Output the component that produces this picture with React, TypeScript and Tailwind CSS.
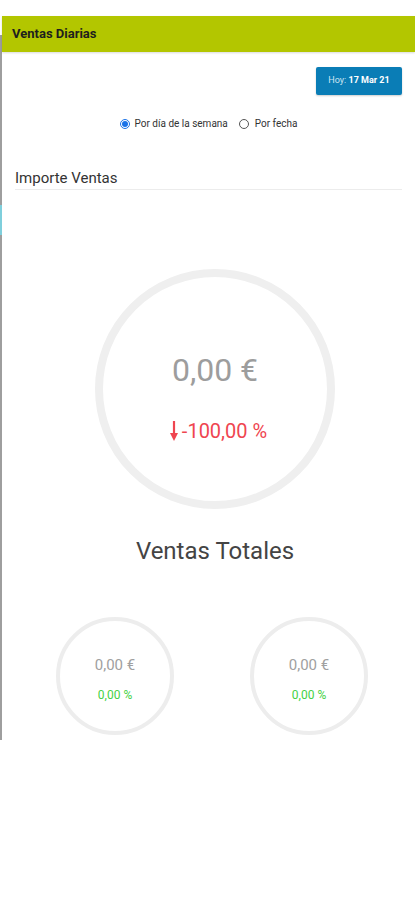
import React from "react";

function Arrow() {
  return (
    <svg width="10" height="22" viewBox="0 0 10 22" className="mr-[3px]">
      <path d="M5 1 V18" stroke="#ef4550" strokeWidth="2.2" />
      <path d="M1 13 L5 21 L9 13 Z" fill="#ef4550" />
    </svg>
  );
}

function SmallGauge({ amount, pct }: { amount: string; pct: string }) {
  return (
    <div className="w-[118px] h-[118px] rounded-full border-[4px] border-[#ededed] flex flex-col items-center">
      <div className="mt-[35px] text-[15px] leading-[18px] text-[#a0a0a0]">{amount}</div>
      <div className="mt-[14px] text-[12px] leading-[14px] text-[#45d145]">{pct}</div>
    </div>
  );
}

export default function App() {
  return (
    <div className="w-[415px] h-[900px] bg-white flex" style={{ fontFamily: "Roboto, 'Liberation Sans', sans-serif" }}>
      <div className="w-[2px] flex flex-col">
        <div className="h-[35px]" />
        <div className="h-[170px] bg-[#9e9e9e]" />
        <div className="h-[30px] bg-[#7fcfdc]" />
        <div className="h-[505px] bg-[#9e9e9e]" />
      </div>
      <div className="flex-1 flex flex-col">
        <div className="mt-[16px] h-[36px] bg-[#b3c600] flex items-center px-[10px] shadow-[0_1px_2px_rgba(0,0,0,0.15)]">
          <span className="text-[13px] font-bold text-[#1e1e1e]">Ventas Diarias</span>
        </div>

        <div className="flex justify-end pr-[13px] mt-[15px]">
          <button className="w-[86px] h-[28px] bg-[#0a7db6] rounded-[2px] text-[9px] text-white flex items-center justify-center shadow-[0_1px_2px_rgba(0,0,0,0.2)]">
            <span className="text-[#cfe6f3]">Hoy:&nbsp;</span>
            <span className="font-bold">17 Mar 21</span>
          </button>
        </div>

        <div className="flex justify-center items-center mt-[21px] text-[10px] text-[#333]">
          <span className="w-[10px] h-[10px] rounded-full border border-[#1a73e8] flex items-center justify-center mr-[5px]">
            <span className="w-[6px] h-[6px] rounded-full bg-[#1a73e8]" />
          </span>
          <span>Por día de la semana</span>
          <span className="w-[10px] h-[10px] rounded-full border border-[#555] ml-[11px] mr-[6px]" />
          <span>Por fecha</span>
        </div>

        <div className="mx-[13px] mt-[38px] border-b border-[#ececec] pb-[2px]">
          <div className="text-[15px] leading-[18px] text-[#333]">Importe Ventas</div>
        </div>

        <div className="ml-[93px] mt-[79px] w-[240px] h-[240px] rounded-full border-[8px] border-[#efefef] flex flex-col items-center">
          <div className="mt-[75px] text-[32px] leading-[36px] text-[#9d9d9d]">0,00 €</div>
          <div className="mt-[31px] ml-[6px] flex items-center text-[20px] leading-[24px] text-[#ef4550]">
            <Arrow />
            <span>-100,00 %</span>
          </div>
        </div>

        <div className="ml-[93px] w-[240px] mt-[28px] text-center text-[24px] leading-[28px] text-[#444]">Ventas Totales</div>

        <div className="flex mt-[52px]">
          <div className="ml-[54px]">
            <SmallGauge amount="0,00 €" pct="0,00 %" />
          </div>
          <div className="ml-[76px]">
            <SmallGauge amount="0,00 €" pct="0,00 %" />
          </div>
        </div>
      </div>
    </div>
  );
}
